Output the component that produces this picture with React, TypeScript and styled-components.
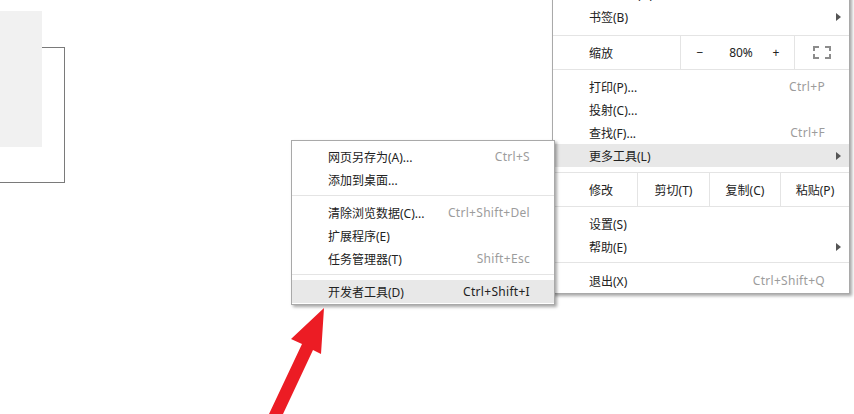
import React from "react";
import styled, { createGlobalStyle } from "styled-components";

const GlobalStyle = createGlobalStyle`
  *, *::before, *::after { box-sizing: border-box; }
  html, body { margin: 0; padding: 0; background: #fff; }
  body {
    width: 854px;
    height: 414px;
    overflow: hidden;
    font-family: "Noto Sans", "Noto Sans CJK SC", sans-serif;
  }
`;

const Stage = styled.div`
  position: relative;
  width: 854px;
  height: 414px;
  overflow: hidden;
  background: #fff;
`;

const Backdrop = styled.div`
  padding-top: 47px;
`;

const OutlineBox = styled.div`
  position: relative;
  width: 65px;
  height: 136px;
  border: 1px solid #7a7a7a;
  border-left: none;
`;

const GrayPanel = styled.div`
  position: absolute;
  top: -37px;
  left: 0;
  width: 42px;
  height: 136px;
  background: #f1f1f1;
`;

const Menu = styled.div<{ $left: number; $top: number; $width: number; $z: number }>`
  position: absolute;
  left: ${(p) => p.$left}px;
  top: ${(p) => p.$top}px;
  width: ${(p) => p.$width}px;
  z-index: ${(p) => p.$z};
  background: #fff;
  border: 1px solid #a9a9a9;
  box-shadow: 2px 2px 3px rgba(0, 0, 0, 0.35);
  padding: 4px 0 1px;
  font-size: 12px;
  color: #222;
`;

const Item = styled.div<{ $active?: boolean }>`
  position: relative;
  display: flex;
  align-items: center;
  height: 23px;
  padding: 0 24px 0 36px;
  background: ${(p) => (p.$active ? "#e8e8e8" : "transparent")};
  white-space: nowrap;
`;

const Label = styled.span`
  flex: 1;
`;

const Shortcut = styled.span<{ $dark?: boolean }>`
  color: ${(p) => (p.$dark ? "#222" : "#9c9c9c")};
  letter-spacing: 0.3px;
`;

const SubArrow = styled.span`
  position: absolute;
  right: 8px;
  top: 50%;
  transform: translateY(-50%);
  width: 0;
  height: 0;
  border-left: 5px solid #555;
  border-top: 4px solid transparent;
  border-bottom: 4px solid transparent;
`;

const Divider = styled.div<{ $top?: number; $bottom?: number }>`
  height: 1px;
  background: #e4e4e4;
  margin: ${(p) => p.$top ?? 4}px 0 ${(p) => p.$bottom ?? 5}px;
`;

const ControlRow = styled.div<{ $cols: string; $top: number; $bottom: number }>`
  display: grid;
  grid-template-columns: ${(p) => p.$cols};
  height: 35px;
  border-top: 1px solid #e4e4e4;
  border-bottom: 1px solid #e4e4e4;
  margin: ${(p) => p.$top}px 0 ${(p) => p.$bottom}px;
`;

const Cell = styled.div<{ $first?: boolean }>`
  display: flex;
  align-items: center;
  justify-content: ${(p) => (p.$first ? "flex-start" : "center")};
  padding-left: ${(p) => (p.$first ? "36px" : "0")};
  border-left: ${(p) => (p.$first ? "none" : "1px solid #e4e4e4")};
  white-space: nowrap;
`;

const ZoomControls = styled.div`
  display: grid;
  grid-template-columns: 38px 44px 26px 1fr;
  align-items: center;
  border-left: 1px solid #e4e4e4;
`;

const ZoomPart = styled.span`
  text-align: center;
  font-size: 12px;
  color: #222;
`;

const FullscreenCell = styled.div`
  display: flex;
  align-items: center;
  justify-content: center;
  border-left: 1px solid #e4e4e4;
`;

const ArrowLayer = styled.svg`
  position: absolute;
  left: 0;
  top: 0;
  z-index: 3;
  pointer-events: none;
`;

function FullscreenIcon() {
  return (
    <svg width="18" height="13" viewBox="0 0 18 13">
      <path
        d="M1 5V1H6M12 1H17V5M17 8V12H12M6 12H1V8"
        fill="none"
        stroke="#8c8c8c"
        strokeWidth="2"
      />
    </svg>
  );
}

export default function App() {
  return (
    <>
      <GlobalStyle />
      <Stage>
        <Backdrop>
          <OutlineBox>
            <GrayPanel />
          </OutlineBox>
        </Backdrop>

        <Menu $left={552} $top={-23} $width={298} $z={1}>
          <Item>
            <Label>历史记录(H)</Label>
            <SubArrow />
          </Item>
          <Item>
            <Label>书签(B)</Label>
            <SubArrow />
          </Item>
          <ControlRow $cols="127px 114px 55px" $top={7} $bottom={5}>
            <Cell $first>缩放</Cell>
            <ZoomControls>
              <ZoomPart>−</ZoomPart>
              <ZoomPart>80%</ZoomPart>
              <ZoomPart>+</ZoomPart>
            </ZoomControls>
            <FullscreenCell>
              <FullscreenIcon />
            </FullscreenCell>
          </ControlRow>
          <Item>
            <Label>打印(P)...</Label>
            <Shortcut>Ctrl+P</Shortcut>
          </Item>
          <Item>
            <Label>投射(C)...</Label>
          </Item>
          <Item>
            <Label>查找(F)...</Label>
            <Shortcut>Ctrl+F</Shortcut>
          </Item>
          <Item $active>
            <Label>更多工具(L)</Label>
            <SubArrow />
          </Item>
          <ControlRow $cols="84px 72px 71px 69px" $top={5} $bottom={5}>
            <Cell $first>修改</Cell>
            <Cell>剪切(T)</Cell>
            <Cell>复制(C)</Cell>
            <Cell>粘贴(P)</Cell>
          </ControlRow>
          <Item>
            <Label>设置(S)</Label>
          </Item>
          <Item>
            <Label>帮助(E)</Label>
            <SubArrow />
          </Item>
          <Divider $top={4} $bottom={6} />
          <Item>
            <Label>退出(X)</Label>
            <Shortcut>Ctrl+Shift+Q</Shortcut>
          </Item>
        </Menu>

        <Menu $left={291} $top={140} $width={264} $z={2}>
          <Item>
            <Label>网页另存为(A)...</Label>
            <Shortcut>Ctrl+S</Shortcut>
          </Item>
          <Item>
            <Label>添加到桌面...</Label>
          </Item>
          <Divider />
          <Item>
            <Label>清除浏览数据(C)...</Label>
            <Shortcut>Ctrl+Shift+Del</Shortcut>
          </Item>
          <Item>
            <Label>扩展程序(E)</Label>
          </Item>
          <Item>
            <Label>任务管理器(T)</Label>
            <Shortcut>Shift+Esc</Shortcut>
          </Item>
          <Divider />
          <Item $active>
            <Label>开发者工具(D)</Label>
            <Shortcut $dark>Ctrl+Shift+I</Shortcut>
          </Item>
        </Menu>

        <ArrowLayer width="854" height="414" viewBox="0 0 854 414">
          <polygon
            points="324,308 291,339 302,344 269,414 283,414 313,350 321,354"
            fill="#ec1c24"
          />
        </ArrowLayer>
      </Stage>
    </>
  );
}
